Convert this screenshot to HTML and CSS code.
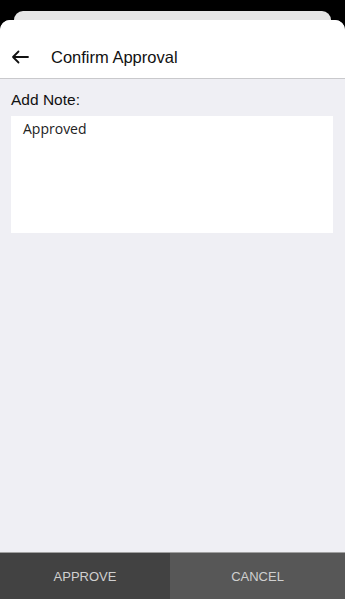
FILE: index.html
```html
<!DOCTYPE html>
<html>
<head>
<meta charset="utf-8">
<link rel="stylesheet" href="styles.css">
</head>
<body>
<div class="screen">
  <div class="backcard"></div>
  <div class="sheet">
    <div class="header">
      <svg class="back" width="18" height="14" viewBox="0 0 18 14"><path d="M17 7H2M7.5 1.5L2 7l5.5 5.5" fill="none" stroke="#111" stroke-width="1.8" stroke-linecap="round" stroke-linejoin="round"/></svg>
      <span class="title">Confirm Approval</span>
    </div>
    <div class="content">
      <div class="label">Add Note:</div>
      <div class="note">Approved</div>
    </div>
    <div class="actions">
      <div class="btn approve">APPROVE</div>
      <div class="btn cancel">CANCEL</div>
    </div>
  </div>
</div>
</body>
</html>
```
FILE: styles.css
```css
html, body { margin: 0; padding: 0; }
body { background: #000; font-family: "Open Sans", "Liberation Sans", sans-serif; }
.screen { width: 345px; height: 599px; display: flex; flex-direction: column; overflow: hidden; }
.backcard { height: 9px; margin: 11px 14px 0 14px; background: #e6e6e6; border-radius: 9px 9px 0 0; flex: none; }
.sheet { flex: 1; display: flex; flex-direction: column; background: #efeff4; border-radius: 10px 10px 0 0; overflow: hidden; }
.header { height: 59px; background: #fff; border-bottom: 1px solid #c9c9cc; display: flex; align-items: center; padding: 16px 0 0 11px; box-sizing: border-box; flex: none; }
.back { flex: none; }
.title { margin-left: 22px; font-family: "Liberation Sans", Arial, sans-serif; font-size: 16.5px; color: #111; }
.content { flex: 1; padding: 12px 12px 0 11px; }
.label { font-family: "Liberation Sans", Arial, sans-serif; font-size: 15.5px; color: #111; line-height: 18px; }
.note { margin-top: 7px; height: 117px; background: #fff; font-family: "Open Sans", sans-serif; font-size: 14px; color: #222; padding: 3px 12px; box-sizing: border-box; }
.actions { height: 46px; display: flex; border-top: 1px solid #a0a0a0; flex: none; }
.btn { display: flex; align-items: center; justify-content: center; font-family: "Liberation Sans", Arial, sans-serif; font-size: 13px; color: #d0d0d0; }
.approve { width: 170px; background: #424242; }
.cancel { flex: 1; background: #575757; }
```
